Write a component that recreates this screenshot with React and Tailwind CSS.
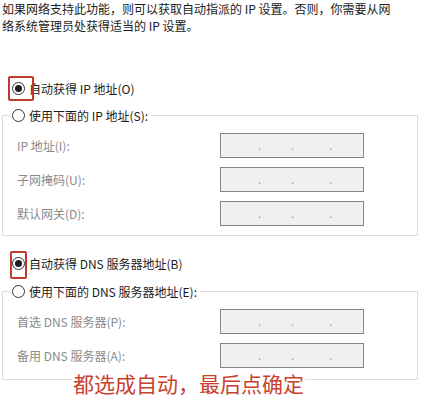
import React from 'react'

function Radio({ checked }) {
  return (
    <span className="w-[13px] h-[13px] rounded-full border border-[#333] bg-white flex items-center justify-center shrink-0">
      {checked && <span className="w-[7px] h-[7px] rounded-full bg-[#1e1e1e]" />}
    </span>
  )
}

function IpBox() {
  return (
    <div className="w-[144px] h-[25px] border border-[#858585] bg-[#f0f0f0] flex items-center text-[11px] leading-none text-[#9a9a9a]">
      <span className="ml-[37px]">.</span>
      <span className="ml-[30px]">.</span>
      <span className="ml-[35px]">.</span>
    </div>
  )
}

function FieldRow({ label }) {
  return (
    <div className="flex items-center pl-[14px]">
      <span className="w-[203px] text-[#8a8a8a]">{label}</span>
      <IpBox />
    </div>
  )
}

function Group({ legend, fields, className }) {
  return (
    <div className={`ml-[2px] w-[416px] border border-[#dcdcdc] ${className}`}>
      <div className="-mt-[9px] ml-[8px] flex w-fit items-center gap-[4px] bg-white pl-[1px] pr-[3px] h-[17px]">
        <Radio />
        <span>{legend}</span>
      </div>
      <div className="flex flex-col gap-[9px] mt-[9px]">
        {fields.map(f => (
          <FieldRow key={f} label={f} />
        ))}
      </div>
    </div>
  )
}

export default function App() {
  return (
    <div className="relative w-[428px] h-[401px] overflow-hidden bg-white text-[12px] leading-[17px] text-[#1b1b1b] font-['Noto_Sans_CJK_SC',sans-serif]">
      <p className="pl-[2px]">
        如果网络支持此功能，则可以获取自动指派的 IP 设置。否则，你需要从网
        <br />
        络系统管理员处获得适当的 IP 设置。
      </p>

      {/* IP */}
      <div className="relative mt-[46px] flex items-center gap-[4px] pl-[12px] h-[17px]">
        <Radio checked />
        <span>自动获得 IP 地址(O)</span>
        <span className="absolute left-[8px] -top-[4px] w-[26px] h-[25px] border-2 border-[#c0392e] rounded-[2px]" />
      </div>
      <Group
        className="mt-[18px] pb-[9px]"
        legend="使用下面的 IP 地址(S):"
        fields={['IP 地址(I):', '子网掩码(U):', '默认网关(D):']}
      />

      {/* DNS */}
      <div className="relative mt-[19px] flex items-center gap-[4px] pl-[12px] h-[17px]">
        <Radio checked />
        <span>自动获得 DNS 服务器地址(B)</span>
        <span className="absolute left-[10px] -top-[4px] w-[17px] h-[28px] border-2 border-[#c0392e] rounded-[2px]" />
      </div>
      <Group
        className="mt-[19px] pb-[11px]"
        legend="使用下面的 DNS 服务器地址(E):"
        fields={['首选 DNS 服务器(P):', '备用 DNS 服务器(A):']}
      />

      {/* 标注 */}
      <span className="absolute left-[72px] top-[372px] bg-white px-[1px] text-[21px] leading-[22px] text-[#c8412f]">
        都选成自动，最后点确定
      </span>
    </div>
  )
}
